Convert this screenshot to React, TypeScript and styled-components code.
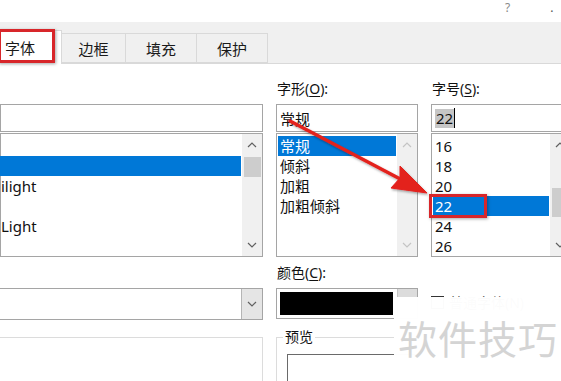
import styled, { createGlobalStyle } from 'styled-components';

const GlobalStyle = createGlobalStyle`
  html, body {
    margin: 0;
    padding: 0;
    background: #ffffff;
  }
  body {
    font-family: "Noto Sans", "Noto Sans CJK SC", sans-serif;
    color: #000000;
  }
`;

const fontRows = ['', '', 'ilight', '', 'Light', ''];
const styleRows = ['常规', '倾斜', '加粗', '加粗倾斜'];
const sizeRows = ['16', '18', '20', '22', '24', '26'];

const Chevron = ({ up, color }: { up?: boolean; color: string }) => (
  <svg width="10" height="6" viewBox="0 0 10 6">
    <path
      d={up ? 'M1 5 L5 1 L9 5' : 'M1 1 L5 5 L9 1'}
      fill="none"
      stroke={color}
      strokeWidth="1.2"
    />
  </svg>
);

type ScrollProps = { thumbTop?: number; thumbHeight?: number; disabled?: boolean };

const ScrollBar = ({ thumbTop, thumbHeight, disabled }: ScrollProps) => {
  const color = disabled ? '#c4c4c4' : '#606060';
  return (
    <Scroll>
      <ScrollButton>
        <Chevron up color={color} />
      </ScrollButton>
      <Track>
        {thumbHeight ? <Thumb $top={thumbTop ?? 0} $height={thumbHeight} /> : null}
      </Track>
      <ScrollButton>
        <Chevron color={color} />
      </ScrollButton>
    </Scroll>
  );
};

const App = () => {
  return (
    <Page>
      <GlobalStyle />
      <TitleBar>
        <Help>?</Help>
        <CloseDot>.</CloseDot>
      </TitleBar>

      <TabBar>
        <Tab $active>字体</Tab>
        <Tab $width={64}>边框</Tab>
        <Tab $width={71}>填充</Tab>
        <Tab $width={71}>保护</Tab>
      </TabBar>

      <Content>
        <Column>
          <Label>&nbsp;</Label>
          <TextBox />
          <ListBox>
            <Items $shift={-3}>
              {fontRows.map((r, i) => (
                <Row key={i} $selected={i === 1}>
                  {r}
                </Row>
              ))}
            </Items>
            <ScrollBar thumbTop={1} thumbHeight={20} />
          </ListBox>
        </Column>

        <Column>
          <Label>
            字形(<u>O</u>):
          </Label>
          <TextBox>常规</TextBox>
          <ListBox>
            <Items>
              {styleRows.map((r, i) => (
                <Row key={r} $selected={i === 0}>
                  {r}
                </Row>
              ))}
            </Items>
            <ScrollBar disabled />
          </ListBox>
        </Column>

        <Column>
          <Label>
            字号(<u>S</u>):
          </Label>
          <TextBox>
            <Selected>22</Selected>
            <Caret />
          </TextBox>
          <ListBox>
            <Items>
              {sizeRows.map((r) => (
                <Row key={r} $selected={r === '22'}>
                  {r}
                </Row>
              ))}
            </Items>
            <ScrollBar thumbTop={32} thumbHeight={29} />
          </ListBox>
        </Column>

        <Column>
          <Label $top>&nbsp;</Label>
          <Combo>
            <ComboButton>
              <Chevron color="#606060" />
            </ComboButton>
          </Combo>
          <PlainGroup />
        </Column>

        <Column>
          <Label $top>
            颜色(<u>C</u>):
          </Label>
          <ColorPicker>
            <Swatch />
            <ColorButton />
          </ColorPicker>
          <Group>
            <Legend>预览</Legend>
            <PreviewBox />
          </Group>
        </Column>

        <Column>
          <Label $top>&nbsp;</Label>
          <CheckRow>
            <CheckBox />
            <CheckText>普通字体(N)</CheckText>
          </CheckRow>
        </Column>
      </Content>

      <TabMark />
      <SizeMark />
      <Arrow width="561" height="381" viewBox="0 0 561 381">
        <defs>
          <filter id="sh" x="-10%" y="-10%" width="130%" height="130%">
            <feDropShadow dx="1" dy="1.5" stdDeviation="1.2" floodColor="#000" floodOpacity="0.35" />
          </filter>
        </defs>
        <g filter="url(#sh)" fill="#e3201f" stroke="#e3201f">
          <line x1="290" y1="121" x2="404" y2="181" strokeWidth="3.5" strokeLinecap="round" />
          <path d="M427 193 L400 166 L400 178 L391 188 Z" strokeWidth="1" strokeLinejoin="round" />
        </g>
      </Arrow>

      <Watermark>
        <WatermarkText>软件技巧</WatermarkText>
      </Watermark>
    </Page>
  );
};

const Page = styled.div`
  position: relative;
  width: 561px;
  height: 381px;
  overflow: hidden;
  background: #ffffff;
`;

const TitleBar = styled.div`
  display: flex;
  align-items: flex-start;
  height: 22px;
  padding: 1px 0 0 505px;
  box-sizing: border-box;
  font-size: 12px;
  color: #8a8a8a;
`;

const Help = styled.span`
  line-height: 14px;
`;

const CloseDot = styled.span`
  margin-left: 40px;
  line-height: 14px;
  color: #555;
`;

const TabBar = styled.div`
  display: flex;
  align-items: flex-end;
  height: 42px;
  background: #f0f0f0;
  border-bottom: 1px solid #d9d9d9;
  box-sizing: border-box;
  font-size: 15px;
`;

const Tab = styled.div<{ $active?: boolean; $width?: number }>`
  box-sizing: border-box;
  display: flex;
  align-items: center;
  justify-content: ${({ $active }) => ($active ? 'flex-start' : 'center')};
  width: ${({ $active, $width }) => ($active ? 62 : $width ?? 70)}px;
  height: ${({ $active }) => ($active ? 34 : 30)}px;
  padding-left: ${({ $active }) => ($active ? 5 : 0)}px;
  margin-bottom: ${({ $active }) => ($active ? -1 : 0)}px;
  background: ${({ $active }) => ($active ? '#ffffff' : '#f0f0f0')};
  border: 1px solid #d9d9d9;
  border-left: none;
  border-bottom: ${({ $active }) => ($active ? 'none' : '1px solid #d9d9d9')};
  color: #1a1a1a;
`;

const Content = styled.div`
  display: grid;
  grid-template-columns: 263px 142px 140px;
  column-gap: 13px;
  padding-top: 16px;
  font-size: 14px;
`;

const Column = styled.div`
  display: flex;
  flex-direction: column;
  min-width: 0;
`;

const Label = styled.div<{ $top?: boolean }>`
  height: 18px;
  line-height: 18px;
  margin-top: ${({ $top }) => ($top ? 7 : 0)}px;
  margin-bottom: 6px;
  padding-left: 1px;
  color: #111;

  u {
    text-underline-offset: 2px;
  }
`;

const TextBox = styled.div`
  box-sizing: border-box;
  display: flex;
  align-items: center;
  height: 28px;
  margin-left: -2px;
  padding-left: 5px;
  border: 1px solid #a5a5a5;
  font-size: 15px;
  color: #111;

  &:not(:first-child) {
    margin-left: 0;
    padding-left: 3px;
  }
`;

const Selected = styled.span`
  background: #c6c6c6;
  line-height: 19px;
  padding: 0 1px;
`;

const Caret = styled.span`
  width: 1px;
  height: 20px;
  background: #000;
`;

const ListBox = styled.div`
  box-sizing: border-box;
  display: flex;
  height: 124px;
  margin-top: 1px;
  border: 1px solid #a5a5a5;
  font-size: 15px;
`;

const Items = styled.div<{ $shift?: number }>`
  flex: 1;
  min-width: 0;
  padding: 2px 1px 0 1px;
  margin-left: ${({ $shift }) => $shift ?? 0}px;
`;

const Row = styled.div<{ $selected?: boolean }>`
  height: 20px;
  line-height: 20px;
  padding-left: 2px;
  white-space: nowrap;
  overflow: hidden;
  background: ${({ $selected }) => ($selected ? '#0078d7' : 'transparent')};
  color: ${({ $selected }) => ($selected ? '#ffffff' : '#111111')};
`;

const Scroll = styled.div`
  display: flex;
  flex-direction: column;
  width: 20px;
  background: #f0f0f0;
`;

const ScrollButton = styled.div`
  display: flex;
  align-items: center;
  justify-content: center;
  height: 22px;
`;

const Track = styled.div`
  flex: 1;
  padding: 0 1px 0 2px;
`;

const Thumb = styled.div<{ $top: number; $height: number }>`
  margin-top: ${({ $top }) => $top}px;
  height: ${({ $height }) => $height}px;
  background: #cdcdcd;
`;

const Combo = styled.div`
  box-sizing: border-box;
  display: flex;
  justify-content: flex-end;
  height: 32px;
  margin-left: -2px;
  border: 1px solid #a5a5a5;
  background: #ffffff;
`;

const ComboButton = styled.div`
  display: flex;
  align-items: center;
  justify-content: center;
  width: 20px;
  background: #e5e5e5;
  border-left: 1px solid #b5b5b5;
`;

const PlainGroup = styled.div`
  flex: 1;
  margin-top: 17px;
  margin-left: -2px;
  border: 1px solid #dcdcdc;
`;

const ColorPicker = styled.div`
  box-sizing: border-box;
  display: flex;
  height: 31px;
  border: 1px solid #a5a5a5;
  padding: 3px 0 3px 3px;
`;

const Swatch = styled.div`
  width: 113px;
  background: #000000;
`;

const ColorButton = styled.div`
  flex: 1;
  margin: -3px 0 -3px 4px;
  background: #dcdcdc;
  border-left: 1px solid #c4c4c4;
`;

const Group = styled.fieldset`
  flex: 1;
  margin: 9px 0 0;
  padding: 0 0 0 10px;
  border: 1px solid #dcdcdc;
  border-bottom: none;
  min-width: 0;
`;

const Legend = styled.legend`
  padding: 0 2px;
  margin-left: -4px;
  font-size: 14px;
  line-height: 18px;
  color: #111;
`;

const PreviewBox = styled.div`
  height: 40px;
  margin-top: 8px;
  border: 1px solid #6a6a6a;
  border-bottom: none;
  border-right: none;
`;

const CheckRow = styled.div`
  display: flex;
  align-items: flex-start;
  gap: 5px;
  margin-top: 8px;
`;

const CheckBox = styled.div`
  box-sizing: border-box;
  width: 13px;
  height: 13px;
  border: 1px solid #333;
`;

const CheckText = styled.span`
  font-size: 14px;
  line-height: 14px;
  color: #333;
`;

const Mark = styled.div`
  position: absolute;
  box-sizing: border-box;
  border: 3px solid #d8262a;
  box-shadow: 1px 1px 3px rgba(0, 0, 0, 0.35);
`;

const TabMark = styled(Mark)`
  left: -2px;
  top: 29px;
  width: 57px;
  height: 34px;
`;

const SizeMark = styled(Mark)`
  left: 429px;
  top: 194px;
  width: 58px;
  height: 24px;
`;

const Arrow = styled.svg`
  position: absolute;
  left: 0;
  top: 0;
  pointer-events: none;
`;

const Watermark = styled.div`
  position: absolute;
  left: 394px;
  top: 297px;
  right: 0;
  bottom: 0;
  padding: 17px 0 0 4px;
  background: rgba(255, 255, 255, 0.985);
`;

const WatermarkText = styled.div`
  font-family: "Noto Sans CJK SC", sans-serif;
  font-size: 39px;
  line-height: 46px;
  letter-spacing: 1px;
  color: #d4d4d4;
  white-space: nowrap;
`;

export default App;
